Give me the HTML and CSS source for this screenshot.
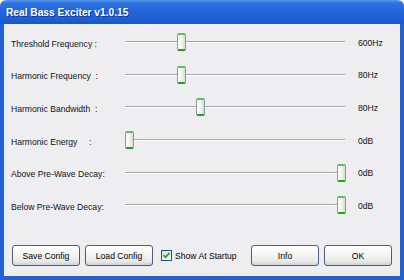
FILE: index.html
```html
<!DOCTYPE html>
<html lang="en">
<head>
    <meta charset="UTF-8">
    <title>Real Bass Exciter v1.0.15</title>
    <link rel="stylesheet" href="styles.css">
</head>
<body>
    <div class="window">
        <div class="titlebar">Real Bass Exciter v1.0.15</div>

        <div class="client">
            <div class="rows">
                <div class="row">
                    <span class="label">Threshold Frequency :</span>
                    <div class="track"><span class="thumb" style="left: 52px"></span></div>
                    <span class="value">600Hz</span>
                </div>
                <div class="row">
                    <span class="label">Harmonic Frequency&nbsp; :</span>
                    <div class="track"><span class="thumb" style="left: 52px"></span></div>
                    <span class="value">80Hz</span>
                </div>
                <div class="row">
                    <span class="label">Harmonic Bandwidth&nbsp; :</span>
                    <div class="track"><span class="thumb" style="left: 71px"></span></div>
                    <span class="value">80Hz</span>
                </div>
                <div class="row">
                    <span class="label">Harmonic Energy&nbsp;&nbsp;&nbsp;&nbsp; :</span>
                    <div class="track"><span class="thumb" style="left: 0px"></span></div>
                    <span class="value">0dB</span>
                </div>
                <div class="row">
                    <span class="label">Above Pre-Wave Decay:</span>
                    <div class="track"><span class="thumb" style="left: 212px"></span></div>
                    <span class="value">0dB</span>
                </div>
                <div class="row">
                    <span class="label">Below Pre-Wave Decay:</span>
                    <div class="track"><span class="thumb" style="left: 212px"></span></div>
                    <span class="value">0dB</span>
                </div>
            </div>

            <div class="footer">
                <button class="btn">Save Config</button>
                <button class="btn">Load Config</button>
                <label class="check">
                    <span class="box">
                        <svg width="9" height="9" viewBox="0 0 9 9">
                            <path d="M1.5 4.2 L3.5 6.3 L7.6 1.8" fill="none" stroke="#21a121" stroke-width="1.8"/>
                        </svg>
                    </span>
                    Show At Startup
                </label>
                <div class="spacer"></div>
                <button class="btn">Info</button>
                <button class="btn">OK</button>
            </div>
        </div>
    </div>
</body>
</html>
```

FILE: styles.css
```css
* {
    margin: 0;
    padding: 0;
    box-sizing: border-box;
}

body {
    width: 404px;
    height: 280px;
    background: #fff;
    font-family: "Liberation Sans", Arial, sans-serif;
    font-size: 8.6px;
    color: #000;
    overflow: hidden;
}

.window {
    width: 404px;
    height: 280px;
    display: flex;
    flex-direction: column;
}

.titlebar {
    height: 24px;
    flex-shrink: 0;
    padding-left: 6px;
    padding-top: 1px;
    display: flex;
    align-items: center;
    color: #fff;
    font-weight: bold;
    font-size: 10.2px;
    border-radius: 6px 6px 0 0;
    background: linear-gradient(#5a9bf0 0%, #2f74e0 12%, #2464d8 45%, #1f5ed4 80%, #1b55c6 100%);
    text-shadow: 1px 1px 0 #0e3a9a;
}

.client {
    flex: 1;
    display: flex;
    flex-direction: column;
    background: #eeeef0;
    border-left: 4px solid #2360d4;
    border-right: 4px solid #2360d4;
    border-bottom: 4px solid #2360d4;
    padding: 2px 8px 10px 7px;
}

.rows {
    display: flex;
    flex-direction: column;
}

.row {
    height: 32.6px;
    display: grid;
    grid-template-columns: 114px 220px 1fr;
    align-items: center;
}

.row .label {
    white-space: nowrap;
    padding-top: 3px;
    color: #111;
}

.row .value {
    padding-top: 1px;
    padding-left: 13px;
    color: #111;
}

.track {
    position: relative;
    height: 2px;
    border-top: 1px solid #a7a7a4;
    border-bottom: 1px solid #fff;
}

.thumb {
    position: absolute;
    top: -9px;
    width: 9px;
    height: 18px;
    border: 1px solid #8c9aa0;
    border-top: 2px solid #5cbf5c;
    border-bottom: 2px solid #21a121;
    border-radius: 2px;
    background: linear-gradient(90deg, #fafafa 0%, #f4f4f2 50%, #d8d8d4 100%);
}

.footer {
    margin-top: auto;
    display: flex;
    align-items: center;
    padding-left: 1px;
}

.btn {
    width: 68px;
    height: 21px;
    margin-right: 5px;
    font-family: "Liberation Sans", Arial, sans-serif;
    font-size: 8.6px;
    color: #000;
    border: 1px solid #4a5d82;
    border-radius: 3px;
    background: linear-gradient(#ffffff 0%, #f6f6f4 40%, #e6e6e2 85%, #c9cfd9 100%);
    box-shadow: inset 0 -1px 0 #cdd5e4;
}

.btn:last-child {
    margin-right: 0;
}

.check {
    display: flex;
    align-items: center;
    gap: 3px;
    margin-left: 3px;
}

.box {
    width: 11px;
    height: 11px;
    border: 1px solid #1c5180;
    background: linear-gradient(135deg, #dcdcd6, #ffffff);
    display: flex;
    align-items: center;
    justify-content: center;
}

.spacer {
    flex: 1;
}
```
